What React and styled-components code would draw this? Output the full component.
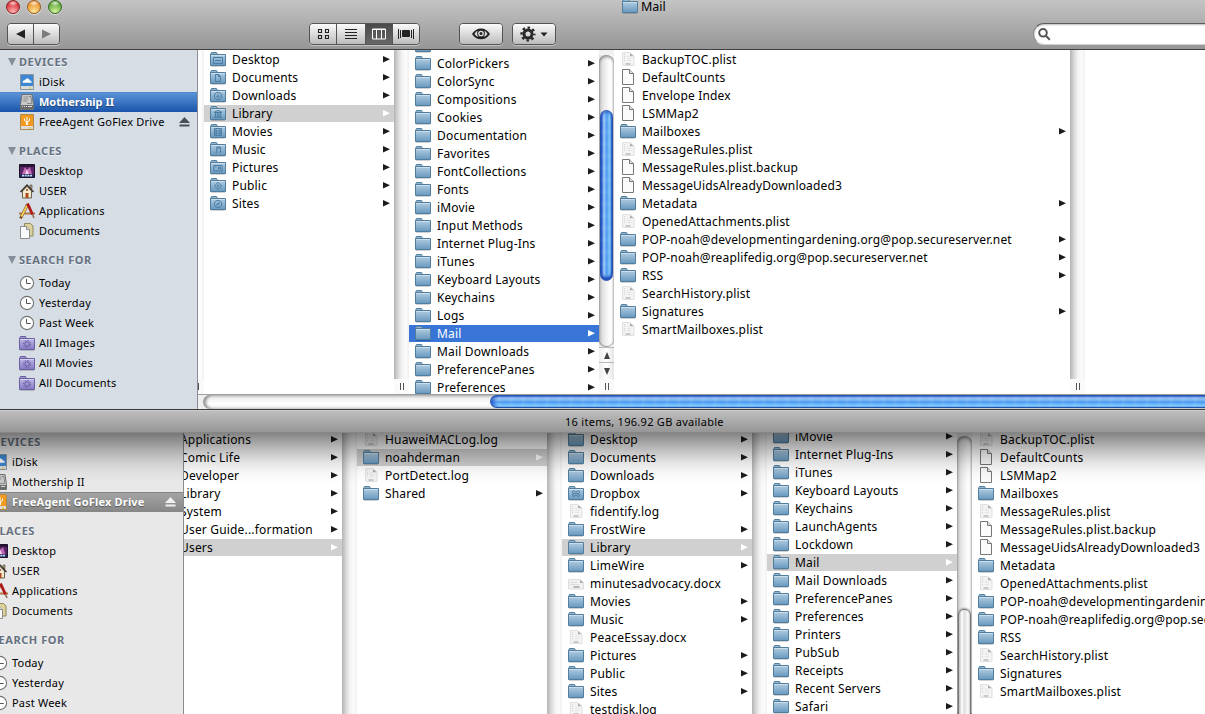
import React from "react";
import styled, { createGlobalStyle, css } from "styled-components";

const GlobalStyle = createGlobalStyle`
  * { box-sizing: border-box; }
  body { margin: 0; background: #fff; overflow: hidden; }
  body, button, input { font-family: "Lucida Grande", "Noto Sans", "Open Sans", sans-serif; }
`;

/* ---------- layout ---------- */
const Screen = styled.main`
  width: 1205px;
  height: 714px;
  overflow: hidden;
  display: flex;
  flex-direction: column;
  color: #000;
`;
const Window = styled.section`
  display: flex;
  flex-direction: column;
  position: relative;
  overflow: hidden;
  flex: ${(p) => (p.$h ? `0 0 ${p.$h}px` : "1 1 0")};
  min-height: 0;
`;
const Body = styled.div`
  display: flex;
  flex: 1;
  min-height: 0;
`;
const Toolbar = styled.header`
  height: 50px;
  flex: none;
  background: linear-gradient(#c4c4c4, #969696);
  border-bottom: 1px solid #404040;
  overflow: hidden;
`;
const TitleRow = styled.div`
  display: flex;
  align-items: center;
  height: 13px;
  margin-bottom: 5px;
  padding-left: 6px;
`;
const Lights = styled.div`
  display: flex;
  gap: 7px;
  width: 616px;
`;
const Light = styled.span`
  width: 14px;
  height: 14px;
  border-radius: 50%;
  border: 1px solid ${(p) => p.$edge};
  background: radial-gradient(ellipse 5px 3px at 50% 18%, #fffc, #fff0 100%),
    radial-gradient(circle at 50% 90%, ${(p) => p.$glow}, ${(p) => p.$base} 75%);
  box-shadow: 0 1px 1px #fff8;
`;
const Title = styled.h1`
  margin: 0;
  display: flex;
  align-items: center;
  gap: 3px;
  font-size: 12.5px;
  line-height: 13px;
  font-weight: 400;
  svg { margin-bottom: 2px; }
`;
const Controls = styled.div`
  display: flex;
  padding: 5px 0 0 7px;
  height: 31px;
`;
const ButtonGroup = styled.div`
  display: flex;
  height: 22px;
  width: ${(p) => p.$w}px;
  margin-right: ${(p) => p.$gap}px;
  border: 1px solid #545454;
  border-radius: 4px;
  overflow: hidden;
  box-shadow: 0 1px 0 #c4c4c4;
`;
const ToolButton = styled.button`
  flex: ${(p) => (p.$w ? `0 0 ${p.$w}px` : 1)};
  padding: 0;
  border: 0;
  border-left: ${(p) => (p.$split ? "1px solid #545454" : 0)};
  display: flex;
  align-items: center;
  justify-content: center;
  background: ${(p) =>
    p.$on ? "linear-gradient(#4a4a4a, #686868)" : "linear-gradient(#fbfbfb, #d8d8d8 55%, #bcbcbc)"};
`;
const SearchField = styled.label`
  flex: 1;
  height: 22px;
  margin-right: -20px;
  padding: 4px 4px;
  border-radius: 11px;
  border: 1px solid #8a8a8a;
  border-top-color: #5c5c5c;
  border-bottom-color: #d0d0d0;
  background: #fff;
  box-shadow: inset 0 1px 2px #0004;
  line-height: 0;
`;
const StatusBar = styled.footer`
  height: 24px;
  flex: none;
  border-top: 1px solid #3c3c3c;
  border-bottom: 1px solid #868686;
  background: linear-gradient(#dcdcdc 0, #bdbdbd 1px, #979797);
  padding-left: 565px;
  font-size: 11px;
  line-height: 24px;
  letter-spacing: 0.28px;
  white-space: nowrap;
`;

/* ---------- sidebar ---------- */
const SideBar = styled.nav`
  flex: none;
  width: ${(p) => (p.$back ? 211 : 198)}px;
  margin-left: ${(p) => (p.$back ? -27 : 0)}px;
  margin-top: ${(p) => (p.$back ? -3 : 0)}px;
  padding-top: 2px;
  background: ${(p) => (p.$back ? "#e8e8e8" : "#d6dde5")};
  border-right: 1px solid #8a8d92;
`;
const Group = styled.div`
  padding-bottom: 9px;
`;
const GroupTitle = styled.h2`
  margin: 0 0 ${(p) => p.$gap || 0}px;
  height: 20px;
  padding: 0 0 2px 8px;
  display: flex;
  align-items: center;
  gap: 3px;
  font-size: 11px;
  font-weight: 700;
  color: #657080;
  text-shadow: 0 1px 0 #fff9;
  letter-spacing: 0.55px;
`;
const Disclosure = styled.span`
  margin-top: 1px;
  border: 4.5px solid transparent;
  border-top: 8px solid #868d9b;
  border-bottom: 0;
`;
const Place = styled.div`
  height: 20px;
  padding: 0 7px 0 19px;
  display: flex;
  align-items: center;
  gap: 4px;
  font-size: 11px;
  white-space: nowrap;
  letter-spacing: 0.2px;
  svg { flex: none; }
  span { flex: 1; padding-bottom: 2px; }
  ${(p) =>
    p.$active &&
    css`
      color: #fff;
      font-weight: 700;
      letter-spacing: ${p.$back ? 0.18 : 0}px;
      text-shadow: 0 1px 1px #0006;
      background: ${p.$back
        ? "linear-gradient(#848484 0, #848484 1px, #a4a4a4 1px, #868686)"
        : "linear-gradient(#4580c8 0, #5a92d6 1px, #1a55ac)"};
    `}
`;

/* ---------- columns ---------- */
const Browser = styled.div`
  flex: 1;
  min-width: 0;
  display: flex;
  flex-direction: column;
  overflow: hidden;
`;
const Columns = styled.div`
  flex: 1;
  min-height: 0;
  display: flex;
  overflow: hidden;
  background: #fff;
`;
const List = styled.div`
  flex: none;
  width: ${(p) => p.$w || 190}px;
  margin-left: ${(p) => p.$left || 0}px;
  margin-top: ${(p) => p.$top}px;
`;
const Row = styled.div`
  height: 17px;
  margin-bottom: 1px;
  padding: 0 4px 0 6px;
  display: flex;
  align-items: center;
  gap: 6px;
  font-size: 12px;
  line-height: 17px;
  letter-spacing: ${(p) => (p.$tight ? 0.15 : 0.18)}px;
  white-space: nowrap;
  background: ${(p) => (p.$sel === "blue" ? "#3875d7" : p.$sel ? "#d0d0d0" : "none")};
  color: ${(p) => (p.$sel === "blue" ? "#fff" : "#000")};
  svg { flex: none; margin-bottom: 1px; }
  span { flex: 1; }
`;
const Separator = styled.div`
  flex: none;
  width: ${(p) => p.$w || 15}px;
  display: flex;
  flex-direction: column;
  justify-content: flex-end;
  background: ${(p) =>
    p.$w
      ? "linear-gradient(90deg, #fff, #fafafa 4px, #eee 5px, #f6f6f6)"
      : "linear-gradient(90deg, #b4b4b4, #d8d8d8 4px, #f3f3f3 8px, #fbfbfb 12px, #f0f0f0)"};
`;
const Grip = styled.div`
  height: 15px;
  flex: none;
  display: flex;
  align-items: center;
  justify-content: ${(p) => (p.$cut ? "flex-start" : "center")};
  gap: 2px;
  padding-left: ${(p) => (p.$cut ? 0 : 1)}px;
  background: #fafafa;
  i { width: 1px; height: 7px; background: #555; }
`;
const ScrollTrack = styled.div`
  flex: none;
  width: 15px;
  display: flex;
  flex-direction: column;
  background: linear-gradient(90deg, #dedede, #ececec 3px, #f6f6f6 8px, #fff 12px, #ececec);
`;
const TrackCap = styled.div`
  height: ${(p) => p.$h}px;
  flex: none;
  background: #f1f1f1;
`;
const TrackBed = styled.div`
  flex: 1;
  min-height: 0;
  border-radius: ${(p) => (p.$open ? "7px 7px 0 0" : "7px")};
  padding: ${(p) => p.$pad}px 1px 0;
  box-shadow: inset 0 2px 3px #0006, inset 0 -1px 1px #0005;
  background: linear-gradient(90deg, #c8c8c8, #e4e4e4 4px, #f8f8f8 9px, #fff 12px, #e8e8e8);
`;
const VThumb = styled.div`
  height: ${(p) => p.$h}px;
  border-radius: ${(p) => (p.$gray ? "6px 6px 0 0" : "6.5px")};
  border: 1px solid ${(p) => (p.$gray ? "#777" : "#2350ae")};
  background: ${(p) =>
    p.$gray
      ? "linear-gradient(90deg, #bbb, #fff 3px, #ddd 5px, #fafafa 9px, #ccc)"
      : "repeating-linear-gradient(#fff0 0 6px, #ffffff14 9px, #fff0 12px), linear-gradient(90deg, #1e52cf, #a0ccf8 3px, #5ba2ef 5px, #4f9bf0 6px, #8cd2ff 9px, #2c62cc)"};
  box-shadow: ${(p) => (p.$gray ? "0 -1px 2px #0005" : "inset 0 2px 2px #1c49b888, inset 0 -3px 3px #1c49b8")};
`;
const StepButton = styled.div`
  flex: none;
  height: ${(p) => p.$h}px;
  border-top: 1px solid #b8b8b8;
  background: linear-gradient(90deg, #ededed, #fff, #e4e4e4);
  display: flex;
  align-items: center;
  justify-content: center;
  &::after {
    content: "";
    border: 3.5px solid transparent;
    ${(p) =>
      p.$up
        ? "border-bottom: 7px solid #444; border-top: 0;"
        : "border-top: 7px solid #444; border-bottom: 0;"}
  }
`;
const HScroll = styled.div`
  height: 15px;
  flex: none;
  background: #eee;
  border-top: 1px solid #a0a0a0;
  padding-left: 5px;
`;
const HBed = styled.div`
  height: 14px;
  border-radius: 7px 0 0 7px;
  padding-left: 287px;
  background: linear-gradient(#d4d4d4, #f2f2f2 4px, #fff 9px, #ececec);
  box-shadow: inset 3px 0 3px #0006;
`;
const HThumb = styled.div`
  height: 13px;
  border-radius: 7px 0 0 7px;
  border: 1px solid #2350ae;
  border-right: 0;
  box-shadow: inset 3px 0 3px #1c49b8aa;
  background: repeating-linear-gradient(90deg, #fff0 0 5px, #ffffff16 8px, #fff0 12px),
    linear-gradient(#3c70d0, #9cc6f5 2px, #6bacf2 5px, #4596f0 6px, #7cc8ff 9px, #8ce0ff);
`;
const Shadow = styled.div`
  position: absolute;
  inset: 0 0 auto;
  height: 50px;
  pointer-events: none;
  background: linear-gradient(#0000007c, #0000005c 9px, #0000003a 19px, #0000001a 30px, #00000008 40px, #0000);
`;

/* ---------- drawings ---------- */
const emblems = {
  desktop: <path d="M3.5 6.5h9v6h-9zM5 9.500h6" />,
  documents: <path d="M5.500 5.500h3l2 2v5h-5zM8.500 5.500v2h2" />,
  downloads: <path d="M8 5.300a3.700 3.700 0 1 0 .1 0M8 7v3.500M6.200 8.800 8 10.700 9.800 8.800" />,
  library: <path d="M4 7.500 8 5.300l4 2.200zM5.500 8v4M7.300 8v4M9 8v4M10.700 8v4M4 12.300h8" />,
  movies: <path d="M4.500 5.500h7v7h-7zM6.200 5.500v7M9.800 5.500v7M4.500 8h7M4.500 10.300h7" />,
  music: <path d="M6.800 11.500V6h3.700v5M5.500 11.700h1.300M9.200 11.200h1.300M6.800 7h3.700" />,
  pictures: <path d="M3.800 6.500h8.400v5.500H3.800zM8.500 8h2v2h-2zM5 8h1.500" />,
  public: <path d="M8 5.200 11.500 9 8 12.600 4.500 9zM8 7.600v2.700M6.800 9h2.400" />,
  sites: <path d="M8 5.300a3.700 3.700 0 1 0 .1 0M6.700 10.200l.9-1.800 1.700-.8-.9 1.800z" />,
  dropbox: <path d="M5.700 5.700 8 7.200l2.300-1.500L12 7.200 10 8.700l2 1.500-1.700 1.300L8 10l-2.300 1.500L4 10.200l2-1.500-2-1.500zM6 8.700h4" />,
  smart: (
    <>
      <circle cx="8" cy="9" r="2.2" />
      <circle cx="8" cy="9" r="3.6" strokeDasharray="1.4 1.4" />
    </>
  ),
};

function Folder({ emblem, smart }) {
  const id = smart ? "smartFill" : "folderFill";
  return (
    <svg width="16" height="16" viewBox="0 0 16 16">
      <defs>
        <linearGradient id={id} x2="0" y2="1">
          <stop stopColor={smart ? "#c0b8e6" : "#b2cde1"} />
          <stop offset="1" stopColor={smart ? "#8579c0" : "#6798bf"} />
        </linearGradient>
      </defs>
      <path d="M1 15.4h14" stroke="#0003" />
      <path d="M.5 3.5 1.5 1.5h5l1 2z" fill={smart ? "#a49ad4" : "#94b6cf"} stroke={smart ? "#665c9c" : "#55809e"} />
      <path d="M.5 3.5h15v11H.5z" fill={`url(#${id})`} stroke={smart ? "#6b60a4" : "#517e9f"} />
      <path d="M1 4.5h14" stroke="#ffffff66" />
      {emblem && (
        <g fill="none" stroke={smart ? "#655aa6" : "#4a7da4"} strokeWidth="1">
          {emblems[emblem]}
        </g>
      )}
    </svg>
  );
}

function Doc({ kind }) {
  if (kind === "wide")
    return (
      <svg width="16" height="16" viewBox="0 0 16 16">
        <path d="M.5 4.500h11l4 3v6.500H.5z" fill="#f1f1f1" stroke="#dedede" />
        <path d="M12 4.500 15.500 8H12z" fill="#aaa" />
        <path d="M5.500 12h6" stroke="#aaa" strokeWidth="1.600" />
        <path d="M2 7.500h7M2 9.500h9" stroke="#dcdcdc" />
      </svg>
    );
  if (kind === "page")
    return (
      <svg width="16" height="16" viewBox="0 0 16 16">
        <path d="M2.500.500h7l4 4v11h-11z" fill="#fbfbfb" stroke="#777" />
        <path d="M9.500.500v4h4" fill="#e4e4e4" stroke="#777" />
      </svg>
    );
  return (
    <svg width="16" height="16" viewBox="0 0 16 16">
      <path d="M2.500 1.500h7l4.500 3.500v9.500H2.500z" fill="#f4f4f4" stroke="#e0e0e0" />
      <path d="M10 2v3.200h3.500z" fill="#aaa" />
      <path d="M5.500 13h5" stroke="#b4b4b4" strokeWidth="1.300" />
      <path d="M4.500 3v8" stroke="#d0d0d0" strokeDasharray="1 1" />
      <path d="M7 5.500h2M7 7.500h4M7 9.500h4" stroke="#e4e4e4" />
    </svg>
  );
}

const Arrow = ({ white }) => (
  <svg width="7" height="7" viewBox="0 0 7 7">
    <path d="M0 0 7 3.300 0 6.600z" fill={white ? "#fff" : "#1c1c1c"} />
  </svg>
);

function PlaceIcon({ name }) {
  if (name === "smart") return <Folder emblem="smart" smart />;
  const art = {
    idisk: (
      <>
        <path d="M1.500.500h13v15h-13z" fill="#d9dcdf" stroke="#8a949c" />
        <path d="M2 1h12v11H2z" fill="#3c86d2" />
        <path d="M4 8.800h8.300c1-1.700-.6-2.700-1.600-2.300C10 4 6.700 4 6 6.200 4 5.800 3.200 8 4 8.800z" fill="#fff" />
        <path d="M10 14h2" stroke="#e8c800" />
      </>
    ),
    disk: (
      <>
        <path d="M3 .500h10l1.500 10v5h-13v-5z" fill="#c9c9c9" stroke="#707070" />
        <path d="M4.500 3h5M4.300 5h5M4 7h4" stroke="#8f8f8f" />
        <path d="M10 2.500h2l.8 7H8" fill="none" stroke="#8a8a8a" />
        <path d="M2 11h12v4H2z" fill="#6a6a6a" />
        <path d="M3 12.500h1M5 12.500h1M7 12.500h1M9 12.500h4" stroke="#ddd" />
      </>
    ),
    usb: (
      <>
        <path d="M1.500.500h13v15h-13z" fill="#ddd" stroke="#ad8a4a" />
        <path d="M2 1h12v11H2z" fill="#f2991f" />
        <path d="M8 10.500V3M5.500 4.500v2.200L8 8.300l2.500-1.600V4.500" fill="none" stroke="#fff" />
        <circle cx="8" cy="9.800" r="1.200" fill="#fff" />
        <path d="M10 14h2" stroke="#d8c400" />
      </>
    ),
    desktop: (
      <>
        <path d="M.5 1.500h15v13H.5z" fill="#5a2468" stroke="#20102c" />
        <path d="M1 2h14v2H1z" fill="#2c1638" />
        <path d="M3 11 6 4l2 3 3-3 2 7z" fill="#c26bb4" />
        <path d="M6 11 8 6l2 5z" fill="#f4d0ee" />
        <path d="M1 11.500h14V14H1z" fill="#1c2c54" />
        <path d="M3 12.600h10" stroke="#bfe0ff" strokeWidth="1.600" strokeDasharray="2 .7" />
      </>
    ),
    home: (
      <>
        <path d="M11 2h2v4h-2z" fill="#b0a080" stroke="#443" strokeWidth=".6" />
        <path d="M3.500 8 8 3.500 12.500 8v7h-9z" fill="#f3ead0" stroke="#6b604a" />
        <path d="M1.500 9 8 2l6.500 7" fill="none" stroke="#3c342c" strokeWidth="1.500" />
        <path d="M6.500 10h3v5h-3z" fill="#b3471c" />
        <path d="M7 6.200h2v1.600H7z" fill="#8a3a20" />
      </>
    ),
    apps: (
      <>
        <path d="M0 10.500h16" stroke="#b07a44" strokeWidth="2" />
        <path d="M1.500 15.500 8.500 1.500" stroke="#7d4b25" strokeWidth="2.800" />
        <path d="M2.500 13.500 8 2.500" stroke="#f2d255" strokeWidth="1.800" />
        <path d="m8.500.500 5 11" stroke="#b01818" strokeWidth="2.800" />
        <path d="m13.500 11.500 1.500 3.500" stroke="#8c6a50" strokeWidth="1.500" />
      </>
    ),
    docs: (
      <>
        <path d="M5.500.500h6l2.500 2.500v10h-8.500z" fill="#dcd39c" stroke="#8f895c" />
        <path d="M1.500 3.500h6l3 3v9h-9z" fill="#fafafa" stroke="#8c8c8c" />
        <path d="M7.500 3.500v3h3" fill="#ddd" stroke="#8c8c8c" />
      </>
    ),
    clock: (
      <>
        <circle cx="8" cy="8" r="6.600" fill="#fff" stroke="#737373" strokeWidth="1.100" />
        <path d="M7.500 3.800v4.700h4.200" fill="none" stroke="#555" />
      </>
    ),
  };
  return (
    <svg width="16" height="16" viewBox="0 0 16 16">
      {art[name]}
    </svg>
  );
}

const Eject = ({ light }) => (
  <svg width="11" height="10" viewBox="0 0 11 10">
    <path d="M5.500 0 11 6H0zM.5 7.500h10v2H.5z" fill={light ? "#efefef" : "#4b5058"} />
  </svg>
);

/* ---------- data ---------- */
const folders = (text) => text.split("|").map((name) => ({ name, icon: "folder", arrow: true }));
const home = ["Desktop", "Documents", "Downloads", "Library", "Movies", "Music", "Pictures", "Public", "Sites"].map(
  (name) => ({ name, icon: "folder", emblem: name.toLowerCase(), arrow: true })
);
const library = folders(
  "ColorPickers|ColorSync|Compositions|Cookies|Documentation|Favorites|FontCollections|Fonts|iMovie|Input Methods|Internet Plug-Ins|iTunes|Keyboard Layouts|Keychains|Logs|Mail|Mail Downloads|PreferencePanes|Preferences"
);
library.unshift({ name: "", icon: "folder" });
const backLibrary = folders(
  "iMovie|Internet Plug-Ins|iTunes|Keyboard Layouts|Keychains|LaunchAgents|Lockdown|Mail|Mail Downloads|PreferencePanes|Preferences|Printers|PubSub|Receipts|Recent Servers|Safari"
);
const volume = folders("Applications|Comic Life|Developer|Library|System|User Guide...formation|Users");
const dir = (name) => ({ name, icon: "folder", arrow: true });
const plist = (name) => ({ name, icon: "plist" });
const page = (name) => ({ name, icon: "page" });
const users = [plist("HuaweiMACLog.log"), dir("noahderman"), plist("PortDetect.log"), dir("Shared")];
const backHome = [
  dir("Desktop"),
  dir("Documents"),
  dir("Downloads"),
  { ...dir("Dropbox"), emblem: "dropbox" },
  plist("fidentify.log"),
  dir("FrostWire"),
  dir("Library"),
  dir("LimeWire"),
  { name: "minutesadvocacy.docx", icon: "wide" },
  dir("Movies"),
  dir("Music"),
  plist("PeaceEssay.docx"),
  dir("Pictures"),
  dir("Public"),
  dir("Sites"),
  plist("testdisk.log"),
];
const mail = [
  plist("BackupTOC.plist"),
  page("DefaultCounts"),
  page("Envelope Index"),
  page("LSMMap2"),
  dir("Mailboxes"),
  plist("MessageRules.plist"),
  page("MessageRules.plist.backup"),
  page("MessageUidsAlreadyDownloaded3"),
  dir("Metadata"),
  plist("OpenedAttachments.plist"),
  dir("POP-noah@developmentingardening.org@pop.secureserver.net"),
  dir("POP-noah@reaplifedig.org@pop.secureserver.net"),
  dir("RSS"),
  plist("SearchHistory.plist"),
  dir("Signatures"),
  plist("SmartMailboxes.plist"),
];
const groups = [
  {
    title: "DEVICES",
    items: [
      ["iDisk", "idisk"],
      ["Mothership II", "disk"],
      ["FreeAgent GoFlex Drive", "usb"],
    ],
  },
  {
    title: "PLACES",
    items: [
      ["Desktop", "desktop"],
      ["USER", "home"],
      ["Applications", "apps"],
      ["Documents", "docs"],
    ],
  },
  {
    title: "SEARCH FOR",
    gap: 3,
    items: [
      ["Today", "clock"],
      ["Yesterday", "clock"],
      ["Past Week", "clock"],
      ["All Images", "smart"],
      ["All Movies", "smart"],
      ["All Documents", "smart"],
    ],
  },
];

/* ---------- composed parts ---------- */
function Files({ items, selected, tone = "gray", ...box }) {
  return (
    <List {...box}>
      {items.map((f) => {
        const sel = f.name === selected ? tone : undefined;
        return (
          <Row key={f.name} $sel={sel} $tight={f.name.length > 28}>
            {f.icon === "folder" ? <Folder emblem={f.emblem} /> : <Doc kind={f.icon} />}
            <span>{f.name}</span>
            {f.arrow && <Arrow white={!!sel} />}
          </Row>
        );
      })}
    </List>
  );
}

function Places({ back, active }) {
  return (
    <SideBar $back={back}>
      {groups.map((g) => (
        <Group key={g.title}>
          <GroupTitle $gap={g.gap}>
            <Disclosure />
            {g.title}
          </GroupTitle>
          {g.items.map(([name, icon]) => (
            <Place key={name} $back={back} $active={name === active}>
              <PlaceIcon name={icon} />
              <span>{name}</span>
              {icon === "usb" && <Eject light={back} />}
            </Place>
          ))}
        </Group>
      ))}
    </SideBar>
  );
}

const Handle = ({ cut }) => (
  <Grip $cut={cut}>
    <i />
    {!cut && <i />}
  </Grip>
);

function WindowToolbar() {
  return (
    <Toolbar>
      <TitleRow>
        <Lights>
          <Light $edge="#8a2222" $base="#d62c34" $glow="#ffb4b4" />
          <Light $edge="#9a5c20" $base="#e8912c" $glow="#ffe89a" />
          <Light $edge="#34671f" $base="#5ba336" $glow="#d4f7a0" />
        </Lights>
        <Title>
          <Folder />
          Mail
        </Title>
      </TitleRow>
      <Controls>
        <ButtonGroup $w={53} $gap={249}>
          <ToolButton aria-label="Back">
            <svg width="9" height="10"><path d="M9 .5v9L0 5z" fill="#222" /></svg>
          </ToolButton>
          <ToolButton $split aria-label="Forward">
            <svg width="9" height="10"><path d="M0 .5v9L9 5z" fill="#7c7c7c" /></svg>
          </ToolButton>
        </ButtonGroup>
        <ButtonGroup $w={111} $gap={39}>
          <ToolButton $w={26} aria-label="Icons">
            <svg width="12" height="12" fill="none" stroke="#222" strokeWidth="1.100">
              <path d="M1.500 1.500h3v3h-3zM8.500 1.500h3v3h-3zM1.500 7.500h3v3h-3zM8.500 7.500h3v3h-3z" />
            </svg>
          </ToolButton>
          <ToolButton $split $w={29} aria-label="List">
            <svg width="12" height="12" stroke="#222"><path d="M0 1.500h12M0 4.500h12M0 7.500h12M0 10.500h12" /></svg>
          </ToolButton>
          <ToolButton $split $on $w={27} aria-label="Columns">
            <svg width="14" height="12" fill="none" stroke="#fff"><path d="M.5 1h13v10H.5zM.5 1.500h13M4.500 1v10M9.500 1v10" /></svg>
          </ToolButton>
          <ToolButton $split aria-label="Cover Flow">
            <svg width="16" height="10" stroke="#222"><path d="M.5 0v10M2.500 1v8M13.500 1v8M15.500 0v10" /><path d="M4.500 1.500h7v6h-7z" fill="#222" /></svg>
          </ToolButton>
        </ButtonGroup>
        <ButtonGroup $w={44} $gap={9}>
          <ToolButton aria-label="Quick Look">
            <svg width="18" height="12" viewBox="0 0 18 12">
              <path d="M0 6C4-1.500 14-1.500 18 6 14 13 4 13 0 6z" fill="#222" />
              <path d="M2.500 6C4 3.500 5 3 5.500 3c-1 3 0 5 1 6C5 8.500 3.500 7.500 2.500 6zM15.500 6C14 3.500 13 3 12.500 3c1 3 0 5-1 6 1.500-.5 3-1.500 4-3z" fill="#ddd" />
              <circle cx="9" cy="5.500" r="2.200" fill="none" stroke="#e4e4e4" strokeWidth="1.300" />
            </svg>
          </ToolButton>
        </ButtonGroup>
        <ButtonGroup $w={44} $gap={477}>
          <ToolButton aria-label="Action">
            <svg width="28" height="16" viewBox="0 0 28 16">
              <circle cx="8" cy="8" r="4" fill="none" stroke="#2a2a2a" strokeWidth="3" />
              <circle cx="8" cy="8" r="6.400" fill="none" stroke="#2a2a2a" strokeWidth="2.400" strokeDasharray="2.513 2.513" strokeDashoffset="1.256" />
              <path d="M20.500 6.500h7L24 10.500z" fill="#222" />
            </svg>
          </ToolButton>
        </ButtonGroup>
        <SearchField aria-label="Search">
          <svg width="13" height="13" fill="none" stroke="#555" strokeWidth="2">
            <circle cx="5" cy="4.800" r="3.800" />
            <path d="m7.800 7.800 4 4" />
          </svg>
        </SearchField>
      </Controls>
    </Toolbar>
  );
}

export default function App() {
  return (
    <Screen>
      <GlobalStyle />
      <Window $h={433}>
        <WindowToolbar />
        <Body>
          <Places active="Mothership II" />
          <Browser>
            <Columns>
              <Separator $w={6}>
                <Handle cut />
              </Separator>
              <Files items={home} selected="Library" $top={1} />
              <Separator>
                <Handle />
              </Separator>
              <Files items={library} selected="Mail" tone="blue" $top={-13} />
              <ScrollTrack>
                <TrackCap $h={5} />
                <TrackBed $pad={55}>
                  <VThumb $h={171} />
                </TrackBed>
                <StepButton $up $h={15} />
                <StepButton $h={17} />
                <Handle />
              </ScrollTrack>
              <Files items={mail} $w={456} $top={1} />
              <Separator>
                <Handle />
              </Separator>
            </Columns>
            <HScroll>
              <HBed>
                <HThumb />
              </HBed>
            </HScroll>
          </Browser>
        </Body>
        <StatusBar>16 items, 196.92 GB available</StatusBar>
      </Window>
      <Window>
        <Body>
          <Places back active="FreeAgent GoFlex Drive" />
          <Columns>
            <Files items={volume} selected="Users" $left={-32} $top={-2} />
            <Separator />
            <Files items={users} selected="noahderman" $top={-2} />
            <Separator />
            <Files items={backHome} selected="Library" $top={-2} />
            <Separator />
            <Files items={backLibrary} selected="Mail" $top={-5} />
            <ScrollTrack>
              <TrackCap $h={3} />
              <TrackBed $open $pad={173}>
                <VThumb $gray $h={120} />
              </TrackBed>
            </ScrollTrack>
            <Files items={mail.filter((f) => f.name !== "Envelope Index")} $w={456} $top={-2} />
          </Columns>
        </Body>
        <Shadow />
      </Window>
    </Screen>
  );
}
